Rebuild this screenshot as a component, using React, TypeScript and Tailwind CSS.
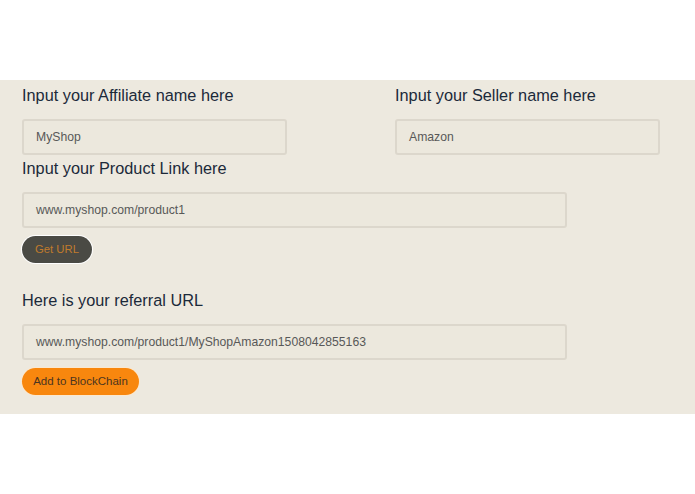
import React from "react";

const font = { fontFamily: '"Liberation Sans", Arial, sans-serif' };

function Label({ children }: { children: React.ReactNode }) {
  return <div className="text-[16.3px] leading-[20px] text-[#1c2a3a] mb-[14px]">{children}</div>;
}

function Field({ value, w }: { value: string; w: string }) {
  return (
    <div
      className={`${w} h-[36px] flex items-center pl-[12px] border-2 border-[#dcd7cc] rounded-[3px] bg-[#ece8dd] text-[12.2px] text-[#585858]`}
    >
      {value}
    </div>
  );
}

export default function App() {
  return (
    <div className="w-[695px] h-[494px] bg-white" style={font}>
      <div className="h-[80px]" />
      <div className="bg-[#ede9df] pl-[22px] pt-[5px] pb-[19px]">
        <div className="flex">
          <div className="w-[373px]">
            <Label>Input your Affiliate name here</Label>
            <Field value="MyShop" w="w-[265px]" />
          </div>
          <div>
            <Label>Input your Seller name here</Label>
            <Field value="Amazon" w="w-[265px]" />
          </div>
        </div>
        <div className="mt-[3px]">
          <Label>Input your Product Link here</Label>
          <Field value="www.myshop.com/product1" w="w-[545px]" />
        </div>
        <button className="mt-[8px] h-[27px] w-[70px] rounded-full bg-[#4a4a44] text-[#c07b2c] text-[11.3px] ring-1 ring-white">
          Get URL
        </button>
        <div className="mt-[27px]">
          <Label>Here is your referral URL</Label>
          <Field value="www.myshop.com/product1/MyShopAmazon1508042855163" w="w-[545px]" />
        </div>
        <button className="mt-[8px] h-[27px] w-[117px] rounded-full bg-[#f8870e] text-[#4b3520] text-[11.5px] ring-1 ring-[#fbe8cf]">
          Add to BlockChain
        </button>
      </div>
    </div>
  );
}
